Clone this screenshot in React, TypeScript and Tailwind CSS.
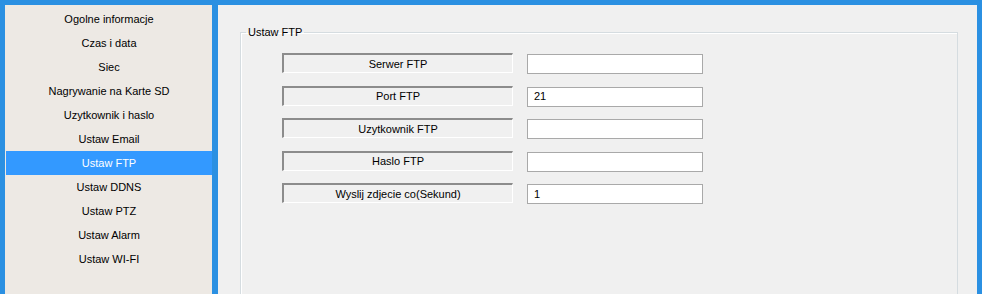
import React from "react";

const items = [
  "Ogolne informacje",
  "Czas i data",
  "Siec",
  "Nagrywanie na Karte SD",
  "Uzytkownik i haslo",
  "Ustaw Email",
  "Ustaw FTP",
  "Ustaw DDNS",
  "Ustaw PTZ",
  "Ustaw Alarm",
  "Ustaw WI-FI",
];

const rows = [
  { label: "Serwer FTP", value: "" },
  { label: "Port FTP", value: "21" },
  { label: "Uzytkownik FTP", value: "" },
  { label: "Haslo FTP", value: "" },
  { label: "Wyslij zdjecie co(Sekund)", value: "1" },
];

export default function App() {
  return (
    <div
      className="w-[982px] h-[294px] overflow-hidden bg-[#2b90e2] flex pt-[5px] pl-[5px] pr-[5px] gap-[6px] text-[11px] text-black"
      style={{ fontFamily: '"Liberation Sans", Arial, sans-serif' }}
    >
      <div className="w-[207px] shrink-0 bg-[#ede9e4] pt-[2px] pl-[1px] flex flex-col">
        {items.map((it) => (
          <div
            key={it}
            className={
              "h-[24px] flex items-center justify-center " +
              (it === "Ustaw FTP" ? "bg-[#3399ff] text-white" : "")
            }
          >
            {it}
          </div>
        ))}
      </div>
      <div className="flex-1 bg-[#f0f0f0] pl-[22px] pr-[19px] pt-[20px]">
        <fieldset className="border border-[#d5dce0] h-[300px] m-0 p-0 shadow-[inset_1px_1px_0_#ffffff]">
          <legend className="ml-[5px] px-[2px] leading-[14px]">Ustaw FTP</legend>
          <div className="mt-[14px] ml-[41px] flex flex-col gap-[11.5px]">
            {rows.map((r) => (
              <div key={r.label} className="flex items-start gap-[14px]">
                <div className="w-[231px] h-[20px] flex items-center justify-center pt-[1px] border-t-2 border-l-2 border-t-[#8c8c8c] border-l-[#8c8c8c] border-b border-r border-b-white border-r-white bg-[#f0f0f0]">
                  {r.label}
                </div>
                <div className="w-[176px] h-[20px] mt-[1px] bg-white border border-[#a9a9a9] flex items-center pl-[6px]">
                  {r.value}
                </div>
              </div>
            ))}
          </div>
        </fieldset>
      </div>
    </div>
  );
}
